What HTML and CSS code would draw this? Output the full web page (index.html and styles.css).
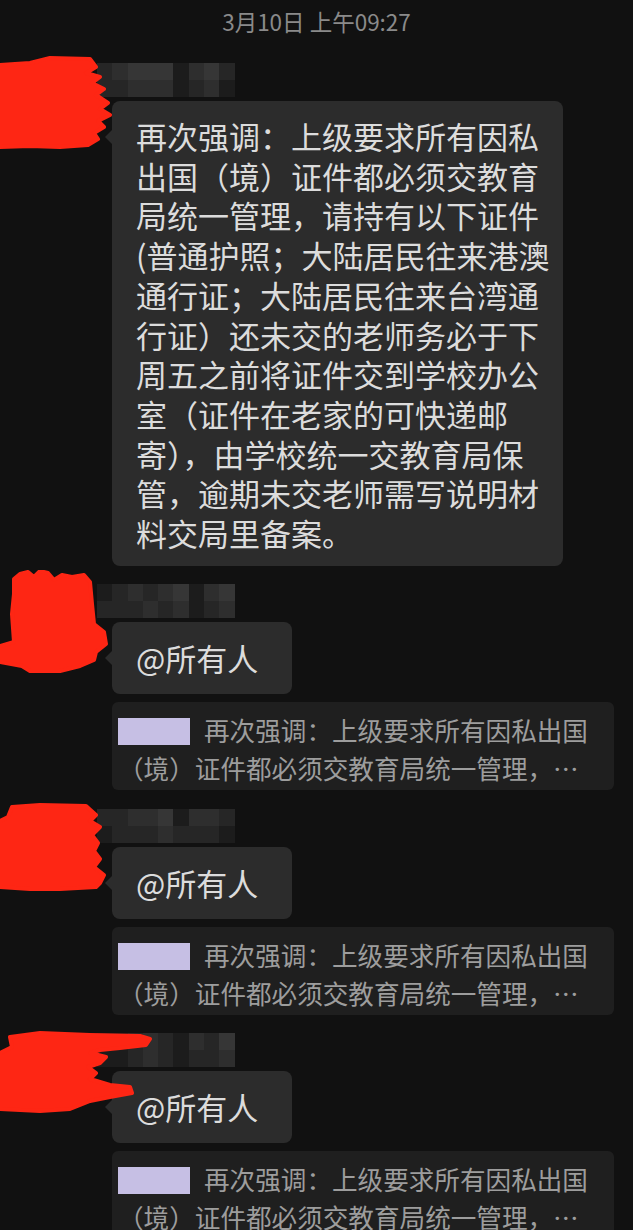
FILE: index.html
```html
<!DOCTYPE html>
<html lang="zh-CN">
  <head>
    <meta charset="UTF-8" />
    <meta name="viewport" content="width=device-width, initial-scale=1.0" />
    <title>群聊</title>
    <link rel="stylesheet" href="styles.css">
  </head>
  <body>
    <div class="chat">
      <div class="time">3月10日 上午09:27</div>

      <!-- message 1 -->
      <div class="msg first">
        <svg class="scribble" width="160" height="110" viewBox="0 -14 160 110">
          <polygon points="0,2 30,0 50,-5 90,-4 96,4 86,10 100,14 92,20 104,26 96,32 108,40 100,46 110,52 98,58 104,64 94,70 98,76 88,82 60,84 30,83 0,84" />
        </svg>
        <div class="name">
          <i class="s2"></i><i class="s3"></i><i class="s4"></i><i class="s4"></i><i class="s4"></i><i class="s1"></i><i class="s3"></i><i class="s4"></i><i class="s2"></i>
          <i class="s2"></i><i class="s2"></i><i class="s3"></i><i class="s3"></i><i class="s3"></i><i class="s1"></i><i class="s2"></i><i class="s3"></i><i class="s1"></i>
        </div>
        <div class="bubble long">
          再次强调：上级要求所有因私<br>
          出国（境）证件都必须交教育<br>
          局统一管理，请持有以下证件<br>
          (普通护照；大陆居民往来港澳<br>
          通行证；大陆居民往来台湾通<br>
          行证）还未交的老师务必于下<br>
          周五之前将证件交到学校办公<br>
          室（证件在老家的可快递邮<br>
          寄），由学校统一交教育局保<br>
          管，逾期未交老师需写说明材<br>
          料交局里备案。
        </div>
      </div>

      <!-- message 2 -->
      <div class="msg">
        <svg class="scribble" width="160" height="110" viewBox="0 -14 160 110">
          <polygon points="14,-5 20,-10 28,-12 34,-7 40,-13 48,-11 54,-4 62,-9 72,-7 84,-9 90,-2 92,20 94,40 104,48 106,60 96,68 94,76 80,82 60,87 30,87 22,82 0,78 0,62 14,58 12,30 14,10" />
        </svg>
        <div class="name">
          <i class="s1"></i><i class="s2"></i><i class="s3"></i><i class="s2"></i><i class="s3"></i><i class="s4"></i><i class="s1"></i><i class="s3"></i><i class="s4"></i>
          <i class="s2"></i><i class="s2"></i><i class="s2"></i><i class="s3"></i><i class="s2"></i><i class="s3"></i><i class="s1"></i><i class="s2"></i><i class="s3"></i>
        </div>
        <div class="bubble at">@所有人</div>
        <div class="quote">
          <div class="quote-line"><span class="quote-tag"></span>再次强调：上级要求所有因私出国</div>
          <div class="quote-line">（境）证件都必须交教育局统一管理，…</div>
        </div>
      </div>

      <!-- message 3 -->
      <div class="msg">
        <svg class="scribble" width="160" height="110" viewBox="0 -14 160 110">
          <polygon points="12,-2 40,-4 86,-3 96,6 90,12 100,18 92,26 98,34 94,42 100,50 94,58 104,66 100,74 96,78 60,80 30,80 0,78 0,12 8,8" />
        </svg>
        <div class="name">
          <i class="s2"></i><i class="s2"></i><i class="s3"></i><i class="s3"></i><i class="s4"></i><i class="s1"></i><i class="s3"></i><i class="s3"></i><i class="s2"></i>
          <i class="s1"></i><i class="s2"></i><i class="s2"></i><i class="s2"></i><i class="s3"></i><i class="s2"></i><i class="s2"></i><i class="s2"></i><i class="s1"></i>
        </div>
        <div class="bubble at">@所有人</div>
        <div class="quote">
          <div class="quote-line"><span class="quote-tag"></span>再次强调：上级要求所有因私出国</div>
          <div class="quote-line">（境）证件都必须交教育局统一管理，…</div>
        </div>
      </div>

      <!-- message 4 -->
      <div class="msg">
        <svg class="scribble" width="160" height="110" viewBox="0 -14 160 110">
          <polygon points="10,4 40,0 90,2 140,3 150,6 146,12 120,15 100,17 90,20 106,24 100,30 88,34 96,40 90,46 110,52 130,54 132,60 110,64 90,68 70,76 40,78 0,76 0,20 12,14" />
        </svg>
        <div class="name">
          <i class="s1"></i><i class="s1"></i><i class="s2"></i><i class="s3"></i><i class="s2"></i><i class="s1"></i><i class="s3"></i><i class="s2"></i><i class="s4"></i>
          <i class="s1"></i><i class="s1"></i><i class="s2"></i><i class="s3"></i><i class="s2"></i><i class="s1"></i><i class="s2"></i><i class="s2"></i><i class="s3"></i>
        </div>
        <div class="bubble at">@所有人</div>
        <div class="quote">
          <div class="quote-line"><span class="quote-tag"></span>再次强调：上级要求所有因私出国</div>
          <div class="quote-line">（境）证件都必须交教育局统一管理，…</div>
        </div>
      </div>
    </div>
  </body>
</html>
```

FILE: styles.css
```css
body {
  margin: 0;
  background-color: #111111;
  font-family: "Noto Sans CJK SC", "Noto Sans", sans-serif;
  overflow: hidden;
}

.chat {
  height: 1230px;
  overflow: hidden;
}

.time {
  padding-top: 7px;
  height: 28px;
  line-height: 28px;
  font-size: 22.5px;
  color: #8a8a8a;
  text-align: center;
}

.msg {
  position: relative;
  padding-left: 112px;
  margin-top: 18.5px;
}

.msg.first {
  margin-top: 28px;
}

/* red marker over avatar */
.scribble {
  position: absolute;
  left: 0;
  top: -14px;
  z-index: 2;
}

.scribble polygon {
  fill: #fe2614;
  stroke: #fe2614;
  stroke-width: 4;
  stroke-linejoin: round;
}

/* pixelated nickname */
.name {
  display: grid;
  grid-template-columns: repeat(9, 15.3px);
  grid-template-rows: 17px 17px;
  margin-left: -15px;
  margin-bottom: 4px;
  width: 138px;
}

.name i {
  display: block;
}

.s1 {
  background-color: #1c1c1c;
}

.s2 {
  background-color: #262626;
}

.s3 {
  background-color: #2e2e2e;
}

.s4 {
  background-color: #363636;
}

.bubble {
  position: relative;
  box-sizing: border-box;
  background-color: #2c2c2c;
  border-radius: 8px;
  color: #dcdcdc;
  font-size: 31px;
  line-height: 39.7px;
  padding: 16px 24px;
  white-space: nowrap;
}

.bubble::before {
  content: '';
  position: absolute;
  left: -7px;
  top: 29px;
  border-top: 7px solid transparent;
  border-bottom: 7px solid transparent;
  border-right: 7px solid #2c2c2c;
}

.bubble.long {
  width: 451px;
  padding: 15px 24px 13px;
}

.bubble.at {
  width: 180px;
  height: 72px;
}

.quote {
  box-sizing: border-box;
  width: 502px;
  height: 88px;
  margin-top: 8px;
  padding: 9px 6px 3px;
  background-color: #1f1f1f;
  border-radius: 6px;
  color: #9d9d9d;
  font-size: 25.6px;
  line-height: 38px;
  white-space: nowrap;
  overflow: hidden;
}

.quote-tag {
  display: inline-block;
  width: 72px;
  height: 27px;
  margin-right: 14px;
  vertical-align: -4px;
  background-color: #c6bfe4;
}
```
